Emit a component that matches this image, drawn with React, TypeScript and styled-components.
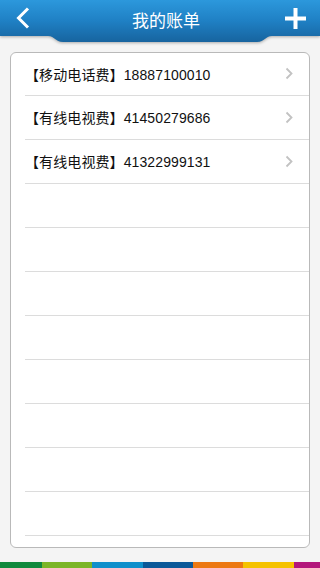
import React from "react";
import styled, { createGlobalStyle } from "styled-components";

const GlobalStyle = createGlobalStyle`
  html, body { margin: 0; padding: 0; background: #f4f4f4; }
  * { box-sizing: border-box; }
  body { font-family: "Liberation Sans", "Noto Sans CJK SC", sans-serif; }
`;

const Page = styled.div`
  width: 320px;
  height: 568px;
  display: flex;
  flex-direction: column;
  background: #f4f4f4;
  overflow: hidden;
`;

const Header = styled.header`
  position: relative;
  height: 36px;
  flex: none;
  display: flex;
  align-items: center;
  justify-content: space-between;
  padding: 0 14px 0 12px;
  z-index: 2;
`;

const HeaderBg = styled.svg`
  position: absolute;
  left: 0;
  top: 0;
  width: 320px;
  height: 46px;
  z-index: -1;
  filter: drop-shadow(0 1px 1.5px rgba(0, 0, 0, 0.3));
`;

const Title = styled.h1`
  margin: 0 0 0 14px;
  font-size: 17px;
  font-weight: normal;
  color: #ffffff;
  font-family: "Noto Sans CJK SC", sans-serif;
  line-height: 1;
  padding-top: 2px;
`;

const IconButton = styled.button`
  width: 22px;
  height: 24px;
  padding: 0;
  border: none;
  background: none;
  display: flex;
  align-items: center;
  justify-content: center;
`;

const Content = styled.main`
  flex: 1;
  padding: 16px 10px 14px;
  display: flex;
`;

const Card = styled.ul`
  margin: 0;
  padding: 0 0 0 14px;
  list-style: none;
  flex: 1;
  height: 496px;
  background: #ffffff;
  border: 1px solid #b9b9b9;
  border-radius: 6px;
  overflow: hidden;
`;

const Row = styled.li`
  height: 44px;
  border-bottom: 1px solid #dcdcdc;
  display: flex;
  align-items: center;
  justify-content: space-between;
  padding: 0 16px 1px 0;
  font-size: 14px;
  color: #111111;
  &:first-child { height: 43px; }
`;

const RowText = styled.span`
  font-family: "Liberation Sans", "Noto Sans CJK SC", sans-serif;
  letter-spacing: 0.1px;
`;

const ColorBar = styled.div`
  height: 6px;
  flex: none;
  display: flex;
`;

const Segment = styled.div<{ $color: string; $w: number }>`
  width: ${(p) => p.$w}px;
  flex: ${(p) => (p.$w === 0 ? 1 : "none")};
  background: ${(p) => p.$color};
`;

const Chevron = () => (
  <svg width="8" height="13" viewBox="0 0 8 13">
    <path d="M1.5 1.5 L6.5 6.5 L1.5 11.5" fill="none" stroke="#c2c2c2" strokeWidth="1.8" />
  </svg>
);

const bills = [
  "【移动电话费】18887100010",
  "【有线电视费】41450279686",
  "【有线电视费】41322999131",
];

const segments = [
  { c: "#10893d", w: 42 },
  { c: "#7bb527", w: 50 },
  { c: "#0e8fcb", w: 51 },
  { c: "#0b5898", w: 50 },
  { c: "#ec7812", w: 50 },
  { c: "#f5c200", w: 51 },
  { c: "#b3167b", w: 0 },
];

export default function App() {
  const rows = [...bills, ...Array(9).fill("")];
  return (
    <>
      <GlobalStyle />
      <Page>
        <Header>
          <HeaderBg viewBox="0 0 320 46">
            <defs>
              <linearGradient id="hg" x1="0" y1="0" x2="0" y2="1">
                <stop offset="0" stopColor="#2c98dc" />
                <stop offset="0.5" stopColor="#1f80c4" />
                <stop offset="1" stopColor="#17649f" />
              </linearGradient>
            </defs>
            <path
              d="M0 0 H320 V36 H272 C265 36 265 42 257 42 H63 C55 42 55 36 48 36 H0 Z"
              fill="url(#hg)"
            />
          </HeaderBg>
          <IconButton aria-label="返回">
            <svg width="14" height="22" viewBox="0 0 14 22">
              <path d="M12 1.5 L2.5 11 L12 20.5" fill="none" stroke="#fff" strokeWidth="3" />
            </svg>
          </IconButton>
          <Title>我的账单</Title>
          <IconButton aria-label="添加">
            <svg width="21" height="21" viewBox="0 0 21 21">
              <rect x="0" y="8.5" width="21" height="4" fill="#fff" />
              <rect x="8.5" y="0" width="4" height="21" fill="#fff" />
            </svg>
          </IconButton>
        </Header>
        <Content>
          <Card>
            {rows.map((t, i) => (
              <Row key={i}>
                <RowText>{t}</RowText>
                {t && <Chevron />}
              </Row>
            ))}
          </Card>
        </Content>
        <ColorBar>
          {segments.map((s, i) => (
            <Segment key={i} $color={s.c} $w={s.w} />
          ))}
        </ColorBar>
      </Page>
    </>
  );
}
